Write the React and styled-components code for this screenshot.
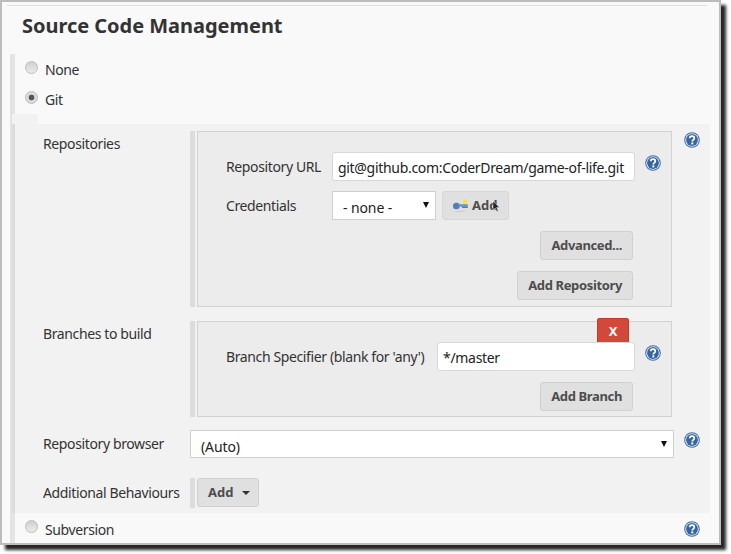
import React from "react";
import styled, { createGlobalStyle } from "styled-components";

const GlobalStyle = createGlobalStyle`
  html, body {
    margin: 0;
    padding: 0;
    background: #fff;
  }
  body {
    width: 731px;
    height: 554px;
    overflow: hidden;
    font-family: "Noto Sans", "Open Sans", sans-serif;
    font-size: 14px;
    letter-spacing: -0.38px;
    color: #333;
  }
`;

const Window = styled.div`
  box-sizing: border-box;
  width: 721px;
  height: 545px;
  background: #f9f9f9;
  border: 2px solid #bcbcbc;
  box-shadow: 5px 5px 3px rgba(0, 0, 0, 0.85);
  display: flex;
  flex-direction: column;
`;

const TopRule = styled.div`
  height: 1px;
  margin: 3px 12px 0 5px;
  background: #e0e0e0;
  flex: none;
`;

const Title = styled.h2`
  margin: 0;
  height: 48px;
  padding-left: 20px;
  font-size: 20px;
  line-height: 40px;
  font-weight: 700;
  letter-spacing: -0.03px;
  color: #333;
  flex: none;
`;

const Section = styled.section`
  margin-left: 8px;
  border-left: 5px solid #e4e4e4;
  flex: 1;
  display: flex;
  flex-direction: column;
  min-height: 0;
`;

const RadioRow = styled.label`
  height: ${(p) => p.$height || 30}px;
  display: flex;
  align-items: center;
  padding-left: 10px;
  flex: none;
  position: relative;
`;

const RadioDot = styled.span`
  box-sizing: border-box;
  width: 13px;
  height: 13px;
  margin-top: -4px;
  margin-right: 7px;
  border-radius: 50%;
  border: 1px solid #bcbcbc;
  background: ${(p) =>
    p.$checked
      ? "radial-gradient(circle, #555 0 2.6px, #dcdcdc 3.2px)"
      : "linear-gradient(#cfcfcf, #ececec)"};
  flex: none;
`;

const RadioText = styled.span`
  line-height: 20px;
  margin-top: ${(p) => p.$top || 0}px;
`;

const HelpSlot = styled.span`
  margin-left: auto;
  margin-right: 19px;
  display: flex;
  margin-top: 2px;
`;

const Block = styled.div`
  position: relative;
  margin: 10px 9px 0 -3px;
  border-left: 3px solid #dcdcdc;
  background: #f2f2f2;
  padding: 7px 0 5px;
  display: grid;
  grid-template-columns: 175px 484px auto;
  align-content: start;
  flex: none;
  height: 389px;
  box-sizing: border-box;

  &::before {
    content: "";
    position: absolute;
    left: -3px;
    top: -10px;
    width: 26px;
    height: 10px;
    background: #f2f2f2;
  }
`;

const GroupLabel = styled.div`
  padding-left: 28px;
  padding-top: ${(p) => p.$top || 0}px;
  line-height: 20px;
  margin-top: ${(p) => p.$gap || 0}px;
`;

const Cell = styled.div`
  margin-top: ${(p) => p.$gap || 0}px;
`;

const HelpCell = styled.div`
  padding-left: 10px;
  padding-top: ${(p) => p.$top || 1}px;
  margin-top: ${(p) => p.$gap || 0}px;
`;

const Group = styled.div`
  box-sizing: border-box;
  position: relative;
  width: 482px;
  height: ${(p) => p.$height}px;
  border-left: 5px solid #dcdcdc;
  padding-left: 2px;
  display: flex;
`;

const GroupBox = styled.div`
  box-sizing: border-box;
  position: relative;
  flex: 1;
  background: #ececec;
  border: 1px solid #d2d2d2;
  padding: 20px 36px 0 28px;
  display: flex;
  flex-direction: column;
  gap: 10px;
`;

const FieldRow = styled.div`
  display: flex;
  align-items: center;
  height: 29px;
  position: relative;
  margin-right: -26px;
`;

const FieldLabel = styled.span`
  width: ${(p) => p.$width}px;
  flex: none;
  line-height: 20px;
  margin-top: 1px;
  white-space: nowrap;
`;

const TextInput = styled.input`
  box-sizing: border-box;
  width: ${(p) => p.$width}px;
  height: 29px;
  padding: 1px 5px 0;
  border: 1px solid #d8d8d8;
  border-radius: 3px;
  background: #fff;
  color: #222;
  font: inherit;
  letter-spacing: -0.31px;
  outline: none;
  flex: none;
`;

const SelectBox = styled.div`
  box-sizing: border-box;
  width: ${(p) => p.$width}px;
  height: ${(p) => p.$height}px;
  padding: 4px ${(p) => p.$pad}px 0;
  border: 1px solid #cfcfcf;
  background: #fff;
  color: #222;
  letter-spacing: -0.1px;
  display: flex;
  align-items: center;
  justify-content: space-between;
  flex: none;
`;

const Arrow = styled.span`
  width: 0;
  height: 0;
  margin-top: ${(p) => p.$top}px;
  margin-right: ${(p) => p.$right}px;
  border-left: 3.5px solid transparent;
  border-right: 3.5px solid transparent;
  border-top: 6px solid #111;
`;

const Button = styled.button`
  box-sizing: border-box;
  height: 29px;
  padding: 0 10px 2px;
  border: 1px solid #d0d0d0;
  border-radius: 3px;
  background: #e0e0e0;
  color: #4d4d4d;
  font: 700 13px "Noto Sans", "Open Sans", sans-serif;
  letter-spacing: -0.36px;
  display: inline-flex;
  align-items: center;
  gap: 4px;
  position: relative;
  flex: none;
`;

const CredentialsAdd = styled(Button)`
  margin-left: 6px;
  width: 67px;
  padding: 0 0 2px 10px;
  border-color: #d6d6d6;
  letter-spacing: 0;
`;

const ButtonRow = styled.div`
  display: flex;
  justify-content: flex-end;
  margin-top: 1px;
  margin-right: 2px;
  height: 29px;
`;

const DeleteButton = styled.button`
  position: absolute;
  top: -4px;
  right: 42px;
  width: 32px;
  height: 26px;
  padding: 0;
  border: 1px solid #c23c2d;
  border-radius: 2px;
  background: #d24939;
  color: #fff;
  font: 700 13px "Noto Sans", "Open Sans", sans-serif;
`;

const Cursor = styled.svg`
  position: absolute;
  left: 49px;
  top: 8px;
`;

const Help = styled.svg`
  display: block;
  flex: none;
  margin-left: ${(p) => p.$left || 0}px;
  margin-top: ${(p) => p.$top || 0}px;
`;

const Caret = styled.span`
  width: 0;
  height: 0;
  border-left: 4px solid transparent;
  border-right: 4px solid transparent;
  border-top: 4px solid #333;
  margin-left: 5px;
  margin-top: 2px;
`;

const AddGroup = styled(Group)`
  height: 30px;
`;

const AddButton = styled(Button)`
  width: 62px;
  padding: 0 0 2px 10px;
  letter-spacing: 0;
`;

const HelpIcon = (props) => (
  <Help width="16" height="16" viewBox="0 0 16 16" {...props}>
    <circle cx="8" cy="8" r="7.8" fill="#3d6ba8" />
    <circle cx="8" cy="8" r="6.8" fill="#e8eef6" />
    <circle cx="8" cy="8" r="5.9" fill="#35659f" />
    <path
      d="M5.7 6.3c0-1.4 1-2.1 2.3-2.1s2.3.8 2.3 2c0 1.8-2 1.7-2 3.3"
      fill="none"
      stroke="#fff"
      strokeWidth="1.7"
    />
    <rect x="7.3" y="10.4" width="2" height="2" fill="#fff" />
  </Help>
);

const KeyIcon = () => (
  <svg width="15" height="14" viewBox="0 0 15 14">
    <ellipse cx="7" cy="13.2" rx="6" ry="0.8" fill="#cfcfcf" />
    <circle cx="12" cy="3.8" r="2.2" fill="#f4e04d" />
    <ellipse cx="3.4" cy="8" rx="3.4" ry="3.2" fill="#4f7fb5" />
    <rect x="5.5" y="6.2" width="9.3" height="2.6" fill="#6d95c4" />
    <rect x="9" y="8.6" width="5.8" height="1.4" fill="#4f7fb5" />
  </svg>
);

export default function App() {
  return (
    <>
      <GlobalStyle />
      <Window>
        <TopRule />
        <Title>Source Code Management</Title>
        <Section>
          <RadioRow $height={31}>
            <RadioDot />
            <RadioText>None</RadioText>
          </RadioRow>
          <RadioRow $height={29}>
            <RadioDot $checked />
            <RadioText>Git</RadioText>
          </RadioRow>
          <Block>
            <GroupLabel $top={3}>Repositories</GroupLabel>
            <Cell>
              <Group $height={176}>
                <GroupBox>
                  <FieldRow>
                    <FieldLabel $width={106}>Repository URL</FieldLabel>
                    <TextInput readOnly $width={303} value="git@github.com:CoderDream/game-of-life.git" />
                    <HelpIcon $left={10} $top={-7} />
                  </FieldRow>
                  <FieldRow>
                    <FieldLabel $width={106}>Credentials</FieldLabel>
                    <SelectBox $width={104} $height={29} $pad={10}>
                      - none -
                      <Arrow $right={-4} $top={-6} />
                    </SelectBox>
                    <CredentialsAdd>
                      <KeyIcon />
                      <span>Add</span>
                      <Cursor width="9" height="13" viewBox="0 0 9 13">
                        <path d="M1 1v9l2.2-2 1.6 3.4 1.4-.7L4.6 7.4H7.5z" fill="#222" stroke="#eee" strokeWidth="0.5" />
                      </Cursor>
                    </CredentialsAdd>
                  </FieldRow>
                  <ButtonRow>
                    <Button>Advanced...</Button>
                  </ButtonRow>
                  <ButtonRow>
                    <Button>Add Repository</Button>
                  </ButtonRow>
                </GroupBox>
              </Group>
            </Cell>
            <HelpCell>
              <HelpIcon />
            </HelpCell>

            <GroupLabel $gap={14} $top={3}>Branches to build</GroupLabel>
            <Cell $gap={14}>
              <Group $height={96}>
                <GroupBox>
                  <DeleteButton>X</DeleteButton>
                  <FieldRow>
                    <FieldLabel $width={211}>Branch Specifier (blank for 'any')</FieldLabel>
                    <TextInput readOnly $width={198} value="*/master" />
                    <HelpIcon $left={10} $top={-7} />
                  </FieldRow>
                  <ButtonRow>
                    <Button>Add Branch</Button>
                  </ButtonRow>
                </GroupBox>
              </Group>
            </Cell>
            <div />

            <GroupLabel $gap={13} $top={4}>Repository browser</GroupLabel>
            <Cell $gap={13}>
              <SelectBox $width={484} $height={28} $pad={10}>
                (Auto)
                <Arrow $right={-4} $top={-4} />
              </SelectBox>
            </Cell>
            <HelpCell $gap={13} $top={2}>
              <HelpIcon />
            </HelpCell>

            <GroupLabel $gap={20} $top={5}>Additional Behaviours</GroupLabel>
            <Cell $gap={20}>
              <AddGroup $height={30}>
                <AddButton>
                  Add
                  <Caret />
                </AddButton>
              </AddGroup>
            </Cell>
            <div />
          </Block>
          <RadioRow>
            <RadioDot />
            <RadioText $top={4}>Subversion</RadioText>
            <HelpSlot>
              <HelpIcon />
            </HelpSlot>
          </RadioRow>
        </Section>
      </Window>
    </>
  );
}
